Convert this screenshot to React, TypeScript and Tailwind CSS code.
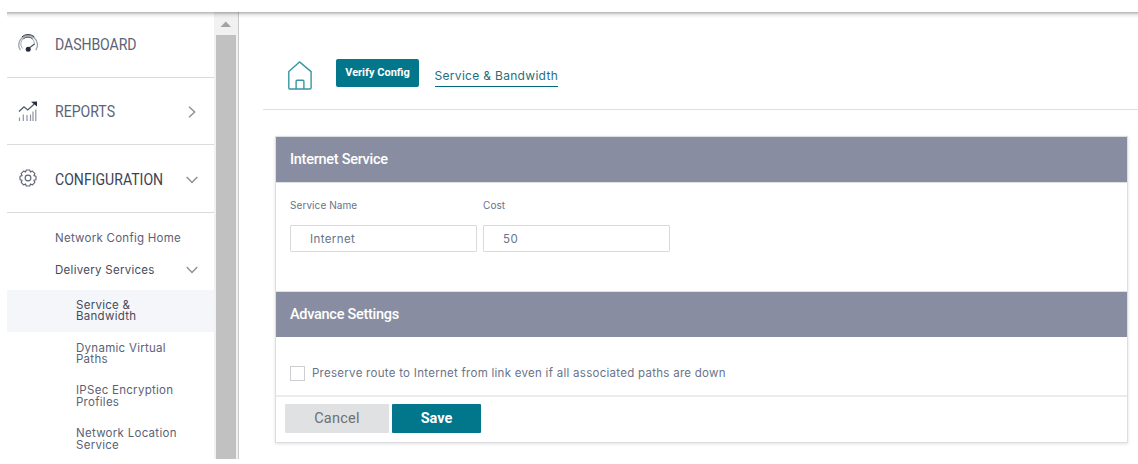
import type { ReactNode } from "react";

function GaugeIcon() {
  return (
    <svg width="22" height="20" viewBox="0 0 22 20" fill="none">
      <path d="M3.4 17.2A9.4 9.2 0 1 1 18.8 17.2" stroke="#9a9eab" strokeWidth="1.3" />
      <path d="M4.9 3.800A9.400 9.200 0 0 1 17.300 3.800" stroke="#2f3545" strokeWidth="1" />
      <path d="M5.800 15.500A6.800 6.600 0 1 1 17.300 12" stroke="#a4a8b3" strokeWidth="1" />
      <path d="M6.400 5.800A6.800 6.600 0 0 1 15.700 5.800" stroke="#4b5161" strokeWidth="1" />
      <path d="M11.500 15.500 17.500 11" stroke="#4b5161" strokeWidth="1.200" />
      <circle cx="11.200" cy="16.200" r="2.500" fill="#252b3b" />
    </svg>
  );
}

function ReportsIcon() {
  return (
    <svg width="20" height="20" viewBox="0 0 20 20" fill="none">
      <path d="M1 10.500 6 5.800 9.800 9 16.300 3" stroke="#50586a" strokeWidth="1.300" />
      <path d="M13 .8 19 .6V5.600Z" fill="#252b3b" />
      <path d="M1.500 20v-3.500M5.300 20v-6.500M9 20v-6M12.500 20v-6.500M15 20V10.500M17.800 20V8.500" stroke="#8e93a2" strokeWidth="1.200" />
    </svg>
  );
}

function GearIcon() {
  return (
    <svg width="18" height="18" viewBox="0 0 18 18" fill="none" stroke="#5c6374" strokeWidth="1.1">
      <path d="M7.200 1h3.600l.6 2.100 2-1 2.500 2.500-1 2 2.100.6v3.600l-2.100.6 1 2-2.500 2.500-2-1-.6 2.100H7.200l-.6-2.100-2 1-2.500-2.500 1-2L1 10.800V7.200l2.100-.6-1-2 2.500-2.500 2 1Z" strokeLinejoin="round" />
      <circle cx="9" cy="9" r="2.900" />
    </svg>
  );
}

function ChevronDown() {
  return (
    <svg width="12" height="8" viewBox="0 0 12 8" fill="none">
      <path d="M.7 1 6 6.500 11.300 1" stroke="#8c8f94" strokeWidth="1.400" />
    </svg>
  );
}

function ChevronRight() {
  return (
    <svg width="8" height="12" viewBox="0 0 8 12" fill="none">
      <path d="M1 .7 6.700 6 1 11.300" stroke="#8c8f94" strokeWidth="1.400" />
    </svg>
  );
}

function HomeIcon() {
  return (
    <svg width="24" height="29" viewBox="0 0 24 29" fill="none" stroke="#3995a3" strokeWidth="1.400" strokeLinejoin="round">
      <path d="M.8 10.600 11.500.9 23.100 10.600V26.800Q23.100 28 22 28H2Q.8 28 .8 26.800Z" />
      <path d="M8.100 28V20.200Q8.100 19.200 9.100 19.200H14.900Q15.900 19.200 15.900 20.200V28" />
    </svg>
  );
}

function MenuRow({ icon, label, labelClass, arrow, className }: { icon: ReactNode; label: string; labelClass: string; arrow?: ReactNode; className: string }) {
  return (
    <div className={`flex items-center border-b border-[#d9dbde] ${className}`}>
      <span className="flex w-[42px] shrink-0 justify-center">{icon}</span>
      <span className={`ml-[5.500px] flex-1 origin-left scale-x-[0.88] text-[16px] whitespace-nowrap ${labelClass}`}>{label}</span>
      <span className="mr-4 flex w-3 justify-center pt-[2px]">{arrow}</span>
    </div>
  );
}

function Sidebar() {
  return (
    <nav className="w-[207px] shrink-0 text-[#5b6276]">
      <MenuRow icon={<span className="pb-[3px]"><GaugeIcon /></span>} label="DASHBOARD" labelClass="tracking-[-0.080px]" className="h-[66px]" />
      <MenuRow icon={<ReportsIcon />} label="REPORTS" labelClass="pt-[2px]" arrow={<ChevronRight />} className="h-[67px]" />
      <MenuRow icon={<span className="pb-[1px]"><GearIcon /></span>} label="CONFIGURATION" labelClass="pt-[2px] text-[#3c4254]" arrow={<ChevronDown />} className="h-[68px]" />
      <div className="pt-[9px] font-['Inter',sans-serif] text-[11.500px]">
        <div className="flex h-8 items-center pt-px pl-12 tracking-[0.260px]">Network Config Home</div>
        <div className="flex h-8 items-center justify-between pr-4 pl-12 tracking-[0.280px] text-[#454b5d]">
          <span className="pt-px">Delivery Services</span>
          <ChevronDown />
        </div>
      </div>
      <div className="mt-[4px] font-['Inter',sans-serif] text-[11.500px] leading-[11.500px] tracking-[0.280px]">
        <div className="flex h-[42px] items-center bg-[#f5f6fa] pl-[69px] text-[#454b5d]"><span>Service &amp;<br />Bandwidth</span></div>
        <div className="flex h-[43px] items-center pt-px pl-[69px]"><span>Dynamic Virtual<br />Paths</span></div>
        <div className="flex h-[43px] items-center pl-[69px]"><span>IPSec Encryption<br />Profiles</span></div>
        <div className="flex h-[42px] items-center pt-px pl-[69px]"><span>Network Location<br />Service</span></div>
      </div>
    </nav>
  );
}

function Scrollbar() {
  return (
    <div className="flex w-[25px] shrink-0 flex-col border-r border-[#c9c9c9] bg-[#f1f1f1] pl-[2px]">
      <svg width="20" height="23" viewBox="0 0 20 23"><path d="M4.500 15 9.800 9.500 15 15Z" fill="#a3a3a3" /></svg>
      <div className="w-[20px] flex-1 bg-[#c1c1c1]" />
    </div>
  );
}

function Field({ label, value }: { label: string; value: string }) {
  return (
    <label className="block">
      <span className="block h-[27px] font-['Inter',sans-serif] text-[10px] leading-[14px] tracking-[0.080px] text-[#68728a]">{label}</span>
      <input readOnly defaultValue={value} className="block h-[27px] w-[187px] rounded-[1px] border border-[#d9dade] bg-white pl-[19px] font-['Inter',sans-serif] text-[11.500px] tracking-[0.400px] text-[#68738b] outline-none" />
    </label>
  );
}

function SectionHeader({ children }: { children: ReactNode }) {
  return <h2 className="flex h-[45px] items-center bg-[#898da1] pl-[14px] text-[14.500px] font-medium tracking-[-0.280px] text-white">{children}</h2>;
}

export default function App() {
  return (
    <div className="h-[464px] w-full overflow-hidden bg-white pt-[12px] pl-[7px] font-['Roboto','Liberation_Sans',sans-serif]">
      <div className="relative flex h-[447px] overflow-hidden">
        <div className="pointer-events-none absolute inset-x-0 top-0 h-[6px] bg-linear-to-b from-[#000]/30 via-[#000]/7 to-transparent" />
        <Sidebar />
        <Scrollbar />
        <main className="min-w-0 flex-1 pl-[24px]">
          <header className="flex h-[98px] items-start border-b border-[#dedede] pl-[25px]">
            <div className="pt-[49px]"><HomeIcon /></div>
            <button className="mt-[47px] ml-[24px] h-[28px] w-[83px] rounded-[2px] bg-[#02768a] pt-px text-[11px] font-bold text-white">Verify Config</button>
            <a className="mt-[55px] ml-[15.500px] h-[20px] border-b border-[#02687a] font-['Inter',sans-serif] text-[12px] leading-[18px] tracking-[0.310px] whitespace-nowrap text-[#246f7d]">Service &amp; Bandwidth</a>
          </header>
          <section className="mt-[26px] ml-[12px] h-[307px] w-[853px] border border-[#dcdee1] shadow-[0_1px_3px_rgba(0,0,0,0.12)]">
            <SectionHeader>Internet Service</SectionHeader>
            <div className="flex h-[110px] gap-[6px] border-y border-[#dedfe5] pt-[15px] pl-[14px]">
              <Field label="Service Name" value="Internet" />
              <Field label="Cost" value="50" />
            </div>
            <SectionHeader>Advance Settings</SectionHeader>
            <div className="flex h-[60px] items-end border-b-2 border-[#ebebec] pb-[14px] pl-[14px]">
              <span className="h-[15px] w-[15px] shrink-0 border border-[#ccced1]" />
              <span className="ml-[7px] font-['Inter',sans-serif] text-[11.500px] leading-[15px] tracking-[0.275px] whitespace-nowrap text-[#68738b]">Preserve route to Internet from link even if all associated paths are down</span>
            </div>
            <div className="flex gap-[3px] pt-[7px] pl-[9px]">
              <button className="h-[29px] w-[104px] rounded-[1px] bg-[#dfe1e2] text-[14.500px] tracking-[0.250px] text-[#6c7072]">Cancel</button>
              <button className="h-[29px] w-[89px] rounded-[1px] bg-[#02768a] text-[14.500px] font-bold text-white">Save</button>
            </div>
          </section>
        </main>
      </div>
    </div>
  );
}
